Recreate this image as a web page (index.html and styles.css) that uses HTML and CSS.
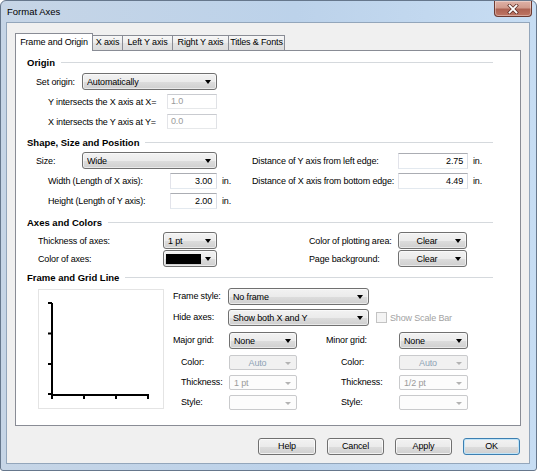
FILE: index.html
```html
<!DOCTYPE html>
<html>
<head>
<meta charset="utf-8">
<title>Format Axes</title>
<link rel="stylesheet" href="styles.css">
</head>
<body>
<div class="window">
  <div class="titlebar">
    <span class="title">Format Axes</span>
    <div class="close">
      <svg width="12" height="10" viewBox="0 0 12 10">
        <path d="M2.5 1.5 L9.5 8.5 M9.5 1.5 L2.5 8.5" stroke="#5a2a22" stroke-width="3.2" stroke-linecap="square"/>
        <path d="M2.5 1.5 L9.5 8.5 M9.5 1.5 L2.5 8.5" stroke="#ffffff" stroke-width="1.8" stroke-linecap="square"/>
      </svg>
    </div>
  </div>
  <div class="client">
    <div class="tabs">
      <div class="tab active t1">Frame and Origin</div>
      <div class="tab t2">X axis</div>
      <div class="tab t3">Left Y axis</div>
      <div class="tab t4">Right Y axis</div>
      <div class="tab t5">Titles &amp; Fonts</div>
    </div>
    <div class="panel">
      <div class="heading"><span>Origin</span></div>
      <div class="stack origin">
        <div class="row ind-a"><span class="lab w46">Set origin:</span><div class="combo w135"><span class="val">Automatically</span><i class="arr"></i></div></div>
        <div class="row ind-b"><span class="lab w119">Y intersects the X axis at X=</span><div class="edit dis w50">1.0</div></div>
        <div class="row ind-b"><span class="lab w119">X intersects the Y axis at Y=</span><div class="edit dis w50">0.0</div></div>
      </div>

      <div class="heading h-shape"><span>Shape, Size and Position</span></div>
      <div class="cols shape">
        <div class="col-left stack">
          <div class="row ind-a"><span class="lab w46">Size:</span><div class="combo w135"><span class="val">Wide</span><i class="arr"></i></div></div>
          <div class="row ind-b"><span class="lab w122">Width (Length of X axis):</span><div class="edit num w47">3.00</div><span class="unit">in.</span></div>
          <div class="row ind-b"><span class="lab w122">Height (Length of Y axis):</span><div class="edit num w47">2.00</div><span class="unit">in.</span></div>
        </div>
        <div class="col-right stack">
          <div class="row"><span class="lab w146">Distance of Y axis from left edge:</span><div class="edit num w70">2.75</div><span class="unit">in.</span></div>
          <div class="row"><span class="lab w146">Distance of X axis from bottom edge:</span><div class="edit num w70">4.49</div><span class="unit">in.</span></div>
        </div>
      </div>

      <div class="heading h-axes"><span>Axes and Colors</span></div>
      <div class="cols axes">
        <div class="col-left stack tight">
          <div class="row ind-c"><span class="lab w125">Thickness of axes:</span><div class="combo w54"><span class="val">1 pt</span><i class="arr"></i></div></div>
          <div class="row ind-c"><span class="lab w125">Color of axes:</span><div class="combo w54 swatch-combo"><span class="swatch"></span><i class="arr"></i></div></div>
        </div>
        <div class="col-right stack tight ind-d">
          <div class="row"><span class="lab w89">Color of plotting area:</span><div class="combo w69 centered"><span class="val">Clear</span><i class="arr"></i></div></div>
          <div class="row"><span class="lab w89">Page background:</span><div class="combo w69 centered"><span class="val">Clear</span><i class="arr"></i></div></div>
        </div>
      </div>

      <div class="heading h-frame"><span>Frame and Grid Line</span></div>
      <div class="frame-body">
        <div class="preview">
          <svg width="124" height="118" viewBox="0 0 124 118">
            <g stroke="#000" stroke-width="2" fill="none">
              <path d="M13 13 V105 H109"/>
              <path d="M9 13 H13 M9 43.5 H13 M9 74 H13 M9 104 H13"/>
              <path d="M13 104 V109 M45 104 V109 M77 104 V109 M109 104 V109"/>
            </g>
          </svg>
        </div>
        <div class="grid">
          <span class="lab g-r1 gl">Frame style:</span>
          <div class="g-wide g-r1"><div class="combo w141"><span class="val">No frame</span><i class="arr"></i></div></div>

          <span class="lab g-r2 gl">Hide axes:</span>
          <div class="g-wide g-r2"><div class="combo w141"><span class="val">Show both X and Y</span><i class="arr"></i></div><span class="check"></span><span class="check-label">Show Scale Bar</span></div>

          <span class="lab g-r3 gl">Major grid:</span>
          <div class="combo g-r3 gc2"><span class="val">None</span><i class="arr"></i></div>
          <span class="lab g-r3 gc4">Minor grid:</span>
          <div class="combo g-r3 gc5"><span class="val">None</span><i class="arr"></i></div>

          <span class="lab sub g-r4 gl sub-major">Color:</span>
          <div class="combo dis auto g-r4 gc2"><span class="val">Auto</span><i class="arr"></i></div>
          <span class="lab sub g-r4 gc4 sub-minor">Color:</span>
          <div class="combo dis auto g-r4 gc5"><span class="val">Auto</span><i class="arr"></i></div>

          <span class="lab sub g-r5 gl sub-major">Thickness:</span>
          <div class="combo dis g-r5 gc2"><span class="val">1 pt</span><i class="arr"></i></div>
          <span class="lab sub g-r5 gc4 sub-minor">Thickness:</span>
          <div class="combo dis g-r5 gc5"><span class="val">1/2 pt</span><i class="arr"></i></div>

          <span class="lab sub g-r6 gl sub-major">Style:</span>
          <div class="combo dis g-r6 gc2"><span class="val"></span><i class="arr"></i></div>
          <span class="lab sub g-r6 gc4 sub-minor">Style:</span>
          <div class="combo dis g-r6 gc5"><span class="val"></span><i class="arr"></i></div>
        </div>
      </div>
    </div>
    <div class="buttons">
      <div class="btn help">Help</div>
      <div class="btn">Cancel</div>
      <div class="btn">Apply</div>
      <div class="btn default">OK</div>
    </div>
  </div>
</div>
</body>
</html>
```

FILE: styles.css
```css
* { box-sizing: border-box; margin: 0; padding: 0; }
html, body { width: 537px; height: 471px; overflow: hidden; }
body {
  font-family: "Liberation Sans", Arial, sans-serif;
  font-size: 9px;
  letter-spacing: -0.15px;
  color: #000;
  background: #ffffff;
}

/* window frame */
.window {
  width: 537px;
  height: 471px;
  border: 1px solid #66778c;
  border-radius: 6px 6px 3px 3px;
  background: linear-gradient(to right, #c6d5e6 0%, #bcd2ea 55%, #c7ddf3 100%);
  display: flex;
  flex-direction: column;
}
.titlebar {
  height: 22px;
  display: flex;
  align-items: flex-start;
  padding-left: 6px;
}
.title { line-height: 22px; font-size: 9.5px; letter-spacing: 0; color: #000; }
.close {
  margin-left: auto;
  margin-right: 4px;
  width: 38px;
  height: 16px;
  border: 1px solid #6c3a31;
  border-top: none;
  border-radius: 0 0 4px 4px;
  background: linear-gradient(to bottom, #dfb2a7 0%, #d19b8d 45%, #ad6353 55%, #bf7664 100%);
  box-shadow: inset 0 0 0 1px rgba(255, 255, 255, 0.35);
  display: flex;
  align-items: center;
  justify-content: center;
}

.client {
  flex: 1;
  margin: 0 7px 7px 6px;
  background: #f0f0f0;
  box-shadow: 0 0 0 1px #93a6bb;
  padding: 10px 8px 0 8px;
}

/* tabs */
.tabs {
  display: flex;
  align-items: flex-end;
  height: 17px;
  position: relative;
  z-index: 1;
}
.tab {
  height: 15px;
  margin-left: -1px;
  border: 1px solid #898c95;
  border-bottom: none;
  background: linear-gradient(to bottom, #f7f7f7 0%, #ececec 50%, #e2e2e2 51%, #dcdcdc 100%);
  text-align: center;
  line-height: 13px;
  white-space: nowrap;
}
.tab.active {
  height: 18px;
  margin-left: 0;
  margin-bottom: -1px;
  background: #ffffff;
  line-height: 17px;
  position: relative;
  z-index: 2;
}
.t1 { width: 78px; }
.t2 { width: 31px; }
.t3 { width: 51px; }
.t4 { width: 57px; }
.t5 { width: 57px; }

.panel {
  height: 376px;
  border: 1px solid #898c95;
  background: #ffffff;
  padding: 5px 27px 0 11px;
}

/* group headings */
.heading {
  display: flex;
  align-items: center;
  height: 12px;
  font-weight: bold;
  font-size: 9.5px;
  letter-spacing: 0;
}
.heading::after {
  content: "";
  flex: 1;
  height: 1px;
  margin-left: 6px;
  background: #d5d9dd;
}
.h-shape { margin-top: 6px; }
.h-axes { margin-top: 7px; }
.h-frame { margin-top: 4px; }

.stack { display: flex; flex-direction: column; gap: 3px; }
.stack.tight { gap: 1px; }
.origin { margin-top: 5px; }
.cols { display: flex; margin-top: 4px; }
.col-left { width: 225px; }
.col-right { flex: 1; }

.row { display: flex; align-items: center; height: 17px; }
.ind-a { padding-left: 9px; }
.ind-b { padding-left: 21px; }
.ind-c { padding-left: 11px; }
.ind-d { padding-left: 57px; }

.lab { white-space: nowrap; flex-shrink: 0; }
.w46 { width: 46px; }
.w119 { width: 119px; }
.w122 { width: 122px; }
.w125 { width: 125px; }
.w146 { width: 146px; }
.w89 { width: 89px; }

.unit { margin-left: 5px; }

/* edit boxes */
.edit {
  height: 16px;
  background: #ffffff;
  border: 1px solid;
  border-color: #abadb3 #dbdfe6 #e3e9ef #e2e3ea;
  line-height: 14px;
  padding: 0 4px 0 3px;
  white-space: nowrap;
}
.edit.num { text-align: right; }
.edit.dis {
  height: 15px;
  line-height: 13px;
  border-color: #c9cbd0 #e0e2e6 #e6e8ea #e3e4e8;
  color: #9a9a9a;
}
.w50 { width: 50px; }
.w47 { width: 47px; }
.w70 { width: 70px; }

/* combo boxes */
.combo {
  height: 17px;
  display: flex;
  align-items: center;
  border: 1px solid #707070;
  border-radius: 3px;
  background: linear-gradient(to bottom, #f2f2f2 0%, #ebebeb 50%, #dddddd 51%, #cfcfcf 100%);
  box-shadow: inset 0 0 0 1px rgba(255, 255, 255, 0.55);
  padding-left: 4px;
  white-space: nowrap;
  flex-shrink: 0;
}
.combo .val { flex: 1; overflow: hidden; }
.combo.centered .val { text-align: center; }
.arr {
  width: 0;
  height: 0;
  border-left: 3.5px solid transparent;
  border-right: 3.5px solid transparent;
  border-top: 4px solid #000;
  margin: 1px 5px 0 4px;
}
.w135 { width: 135px; }
.w54 { width: 54px; }
.w69 { width: 69px; }
.w141 { width: 141px; }

.swatch-combo { padding-left: 2px; }
.swatch {
  width: 38px;
  height: 10px;
  background: #000;
  margin-right: auto;
}

.combo.dis {
  height: 15px;
  border: 1px solid #c9cacc;
  border-radius: 2px;
  background: #fcfcfc;
  box-shadow: none;
  color: #9b9b9b;
}
.combo.dis .arr { border-top-color: #b3b3b3; border-top-width: 3px; border-left-width: 3px; border-right-width: 3px; }
.combo.auto { background: #f1f1f1; }
.combo.auto .val { text-align: center; color: #8ea2b5; }

/* frame section */
.frame-body { display: flex; margin-top: 5px; }
.preview {
  width: 126px;
  height: 120px;
  margin: 1px 0 0 11px;
  border: 1px solid #e4e4e4;
  background: #ffffff;
}
.preview svg { display: block; }
.grid {
  margin-left: 9px;
  display: grid;
  grid-template-columns: 56px 68px 29px 73px 69px;
  grid-template-rows: 21px 23px 23px 20px 20px 17px;
  align-items: start;
}
.grid .lab { line-height: 17px; }
.grid .lab.sub { line-height: 15px; }
.g-r1 { grid-row: 1; }
.g-r2 { grid-row: 2; }
.g-r3 { grid-row: 3; }
.g-r4 { grid-row: 4; }
.g-r5 { grid-row: 5; }
.g-r6 { grid-row: 6; }
.gl { grid-column: 1; }
.gc2 { grid-column: 2; }
.gc4 { grid-column: 4; }
.gc5 { grid-column: 5; }
.g-wide { grid-column: 2 / 6; display: flex; align-items: center; height: 17px; margin-left: -1px; }
.sub-major { padding-left: 8px; }
.sub-minor { padding-left: 15px; }

.check {
  width: 11px;
  height: 11px;
  margin-left: 7px;
  border: 1px solid #c3c3c3;
  background: #f4f4f4;
  flex-shrink: 0;
}
.check-label { margin-left: 3px; color: #a2a2a2; white-space: nowrap; }

/* buttons */
.buttons {
  display: flex;
  justify-content: flex-end;
  gap: 11px;
  margin-top: 12px;
  padding-right: 1px;
}
.btn {
  width: 57px;
  height: 17px;
  border: 1px solid #707070;
  border-radius: 3px;
  background: linear-gradient(to bottom, #f2f2f2 0%, #ebebeb 50%, #dddddd 51%, #cfcfcf 100%);
  box-shadow: inset 0 0 0 1px rgba(255, 255, 255, 0.7);
  text-align: center;
  line-height: 15px;
}
.btn.help { width: 58px; }
.btn.default {
  border-color: #3c7fb1;
  box-shadow: inset 0 0 0 1px #bfe4f8;
}
```
